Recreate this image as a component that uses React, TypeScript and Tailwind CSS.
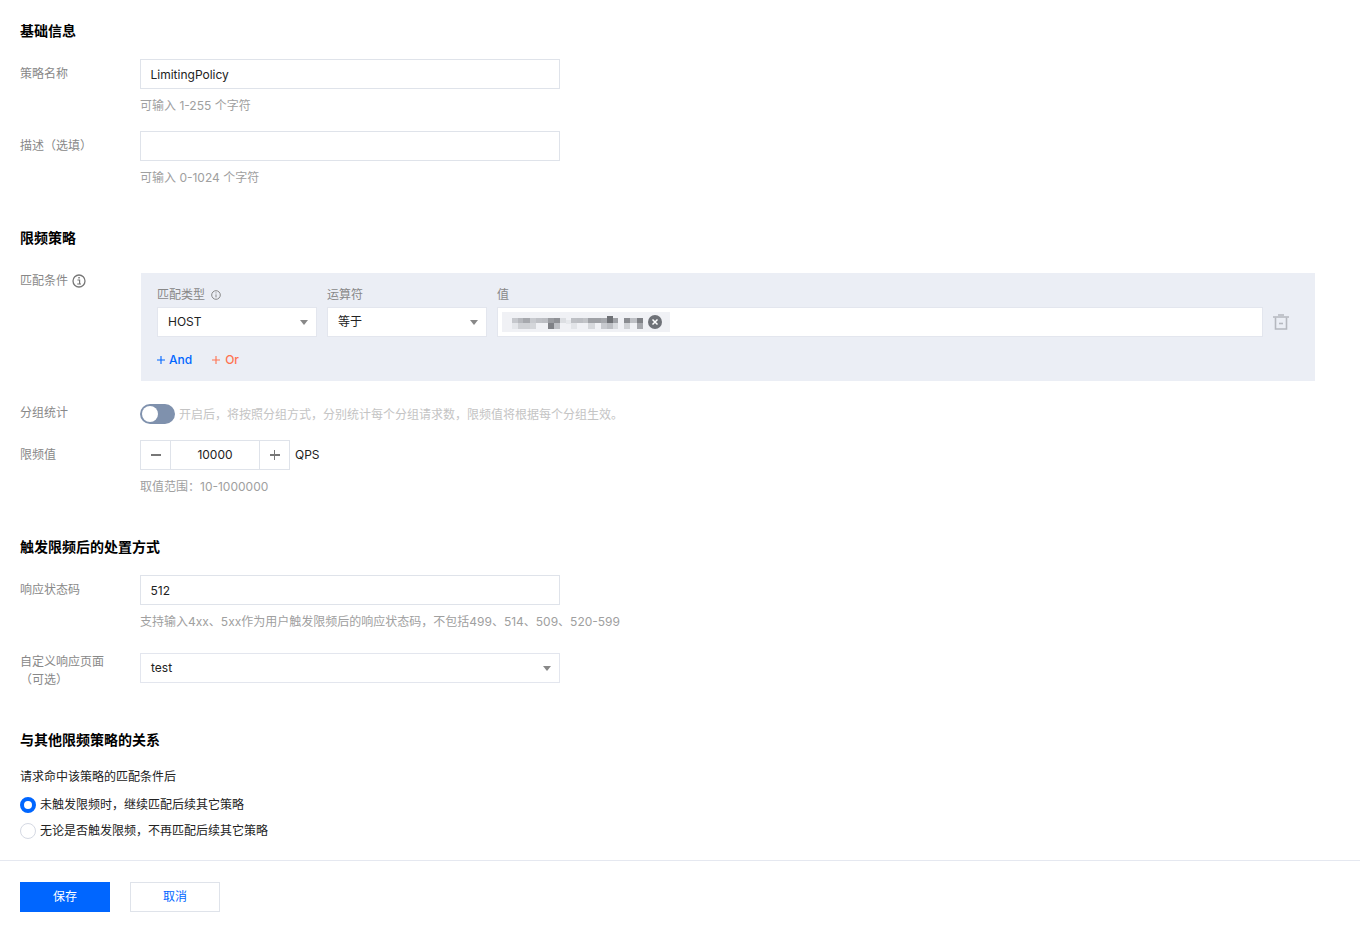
import type { ReactNode } from "react";

const font = { fontFamily: 'Inter, "Noto Sans CJK SC", sans-serif' };

// mosaic of the blurred value tag: [x, y, w, h, colour]
const mosaic: [number, number, number, number, string][] = [
  [10, 6, 6, 5, "#c6c8cd"], [16, 6, 5, 5, "#b6b8bd"], [21, 6, 7, 5, "#a6a8ad"], [28, 6, 6, 5, "#c8cacf"],
  [10, 11, 6, 6, "#e4e6ea"], [16, 11, 12, 6, "#cfd1d5"], [28, 11, 6, 6, "#d4d6da"],
  [34, 6, 6, 5, "#bfc1c6"], [40, 6, 6, 5, "#bcbec3"], [46, 6, 6, 5, "#9a9ca1"], [52, 6, 6, 5, "#8f9196"],
  [46, 11, 6, 6, "#7f8186"], [52, 11, 6, 6, "#bec0c5"], [58, 6, 6, 5, "#dcdee2"],
  [64, 8, 5, 4, "#e6e8ec"], [69, 6, 6, 5, "#bec0c5"], [75, 6, 6, 5, "#bcbec3"], [69, 11, 6, 6, "#e2e4e8"],
  [81, 6, 5, 5, "#c2c4c8"], [86, 6, 7, 5, "#9fa1a6"], [93, 6, 6, 5, "#9fa1a6"], [99, 6, 6, 5, "#a6a8ad"],
  [105, 4, 6, 7, "#6f7176"], [111, 6, 5, 5, "#9fa1a6"], [86, 11, 7, 6, "#d6d8dc"], [99, 11, 6, 6, "#c8cacf"],
  [105, 11, 6, 6, "#bcbec3"], [111, 11, 5, 6, "#d8dade"],
  [122, 6, 6, 5, "#8a8c91"], [128, 6, 7, 5, "#bec0c5"], [135, 6, 6, 5, "#7f8186"], [122, 11, 6, 6, "#cfd1d5"],
  [135, 11, 6, 6, "#a6a8ad"],
];

function Label({ children }: { children: ReactNode }) {
  return <div className="w-[120px] shrink-0 pt-[5px] text-xs leading-5 text-[#888888]">{children}</div>;
}

function Title({ children, className }: { children: ReactNode; className: string }) {
  return <h3 className={`h-5 text-sm leading-5 font-bold text-black ${className}`}>{children}</h3>;
}

function Hint({ children }: { children: ReactNode }) {
  return <p className="ml-[120px] mt-[7px] h-5 text-xs leading-5 text-[#a0a0a0]">{children}</p>;
}

function Input({ value }: { value?: string }) {
  return (
    <div className="flex h-[30px] w-[420px] items-center border border-[#dfe3ea] bg-white px-[9.5px] pt-px text-xs text-[#222222]">
      {value}
    </div>
  );
}

function Select({ value, className }: { value: string; className: string }) {
  return (
    <div className={`flex h-[30px] items-center justify-between border border-[#e3e6ee] bg-white pl-2.5 pr-[8px] text-xs text-[#222222] ${className}`}>
      <span>{value}</span>
      <span className="h-0 w-0 border-x-[4px] border-t-[5px] border-x-transparent border-t-[#888888]" />
    </div>
  );
}

function FieldHead({ children, className }: { children: ReactNode; className: string }) {
  return <div className={`flex h-5 items-center text-xs text-[#888888] ${className}`}>{children}</div>;
}

function Plus({ color }: { color: string }) {
  return (
    <svg width="8" height="8" viewBox="0 0 8 8" fill="none">
      <path d="M0 4h8M4 0v8" stroke={color} strokeWidth="1.1" />
    </svg>
  );
}

export default function App() {
  return (
    <div className="h-[932px] w-[1360px] overflow-hidden bg-white" style={font}>
      <div className="px-5 pt-[21px]">
        <Title className="">基础信息</Title>

        <div className="mt-[18px] flex">
          <Label>策略名称</Label>
          <Input value="LimitingPolicy" />
        </div>
        <Hint>可输入 1-255 个字符</Hint>

        <div className="mt-[15px] flex">
          <Label>描述（选填）</Label>
          <Input />
        </div>
        <Hint>可输入 0-1024 个字符</Hint>

        <Title className="mt-[40px]">限频策略</Title>

        <div className="mt-[25px] flex">
          <div className="flex h-5 w-[121px] shrink-0 items-start gap-1 text-xs leading-[16px] text-[#888888]">
            <span>匹配条件</span>
            <svg width="14" height="14" viewBox="0 0 14 14" fill="none" className="mt-px">
              <circle cx="7" cy="7" r="6" stroke="#777777" strokeWidth="1.3" />
              <rect x="6.3" y="3" width="1.5" height="1.5" fill="#777777" />
              <path d="M5.4 6h2.2v3.8M5.2 10h3.8" stroke="#777777" strokeWidth="1.2" />
            </svg>
          </div>
          <div className="h-[108px] w-[1174px] bg-[#ebeef5] pl-4 pt-3">
            <div className="flex gap-2.5">
              <div className="w-40">
                <FieldHead className="gap-[6px]">
                  <span>匹配类型</span>
                  <svg width="10" height="10" viewBox="0 0 10 10" fill="none">
                    <circle cx="5" cy="5" r="4.3" stroke="#888888" />
                    <path d="M5 4.4v3M5 2.4v1" stroke="#888888" />
                  </svg>
                </FieldHead>
                <Select value="HOST" className="mt-[2px] w-40" />
              </div>
              <div className="w-40">
                <FieldHead className="">运算符</FieldHead>
                <Select value="等于" className="mt-[2px] w-40" />
              </div>
              <div className="w-[766px]">
                <FieldHead className="">值</FieldHead>
                <div className="mt-[2px] flex h-[30px] items-center border border-[#e3e6ee] bg-white pl-[4px]">
                  <div className="relative h-5 w-[168px] bg-[#f0f1f5]">
                    <svg width="150" height="20" className="absolute left-0 top-0">
                      {mosaic.map(([x, y, w, h, c], i) => (
                        <rect key={i} x={x} y={y} width={w} height={h} fill={c} />
                      ))}
                    </svg>
                    <span className="absolute left-[146px] top-[3px] flex h-[14px] w-[14px] items-center justify-center rounded-full bg-[#6f7278]">
                      <svg width="8" height="8" viewBox="0 0 8 8">
                        <path d="M1.5 1.5l5 5M6.5 1.5l-5 5" stroke="#ffffff" strokeWidth="1.5" />
                      </svg>
                    </span>
                  </div>
                </div>
              </div>
              <div className="mt-[22px] flex h-[30px] w-[16px] items-center justify-center">
                <svg width="16" height="16" viewBox="0 0 16 16" fill="none">
                  <path d="M0 3h16M5 1h6" stroke="#b5b8bf" strokeWidth="1.4" />
                  <path d="M2.5 3.5V15h11V3.5" stroke="#b5b8bf" strokeWidth="1.6" />
                  <path d="M6 9.5h4" stroke="#b5b8bf" strokeWidth="1.6" />
                </svg>
              </div>
            </div>
            <div className="mt-[13px] flex h-5 items-center text-xs font-medium">
              <span className="flex items-center gap-1 text-[#0066ff]">
                <Plus color="#0066ff" />
                And
              </span>
              <span className="ml-5 flex items-center gap-[5px] text-[#ff7350]">
                <Plus color="#ff7350" />
                Or
              </span>
            </div>
          </div>
        </div>

        <div className="mt-[21px] flex">
          <div className="w-[120px] shrink-0 pt-px text-xs leading-5 text-[#888888]">分组统计</div>
          <div className="mt-[2px] flex h-5 items-center">
            <span className="flex h-5 w-[35px] items-center rounded-full bg-[#7f91ad] pl-[2px]">
              <span className="h-4 w-4 rounded-full bg-white" />
            </span>
            <span className="ml-[4px] pt-px text-xs text-[#c4c4c4]">
              开启后，将按照分组方式，分别统计每个分组请求数，限频值将根据每个分组生效。
            </span>
          </div>
        </div>

        <div className="mt-[16px] flex">
          <Label>限频值</Label>
          <div className="flex items-center">
            <div className="flex h-[30px] w-[150px] items-center border border-[#dfe3ea] text-xs text-[#222222]">
              <span className="flex h-full w-[30px] items-center justify-center border-r border-[#dfe3ea]">
                <span className="h-[1.5px] w-[10px] bg-[#777777]" />
              </span>
              <span className="flex-1 text-center">10000</span>
              <span className="relative flex h-full w-[30px] items-center justify-center border-l border-[#dfe3ea]">
                <span className="h-[1.5px] w-[10px] bg-[#777777]" />
                <span className="absolute h-[10px] w-[1.5px] bg-[#777777]" />
              </span>
            </div>
            <span className="ml-[5px] text-xs text-[#222222]">QPS</span>
          </div>
        </div>
        <Hint>取值范围：10-1000000</Hint>

        <Title className="mt-[40px]">触发限频后的处置方式</Title>

        <div className="mt-[18px] flex">
          <Label>响应状态码</Label>
          <Input value="512" />
        </div>
        <Hint>支持输入4xx、5xx作为用户触发限频后的响应状态码，不包括499、514、509、520-599</Hint>

        <div className="mt-[21px] flex">
          <div className="w-[120px] shrink-0 text-xs leading-[18px] text-[#888888]">
            自定义响应页面
            <br />
            （可选）
          </div>
          <Select value="test" className="w-[420px] border-[#dfe3ea]" />
        </div>

        <Title className="mt-[41px]">与其他限频策略的关系</Title>

        <p className="mt-[17px] h-5 text-xs leading-5 text-[#222222]">请求命中该策略的匹配条件后</p>
        <div className="mt-[10px] flex h-[16px] items-center gap-[4px] text-xs text-[#222222]">
          <span className="h-4 w-4 rounded-full border-[4px] border-[#0066ff] bg-white" />
          未触发限频时，继续匹配后续其它策略
        </div>
        <div className="mt-[10px] flex h-[16px] items-center gap-[4px] text-xs text-[#222222]">
          <span className="h-4 w-4 rounded-full border border-[#d5d9e3] bg-white" />
          无论是否触发限频，不再匹配后续其它策略
        </div>
      </div>

      <div className="mt-[21px] flex gap-5 border-t border-[#e5e8f0] px-5 pt-[21px]">
        <button className="h-[30px] w-[90px] bg-[#0066ff] text-xs text-white">保存</button>
        <button className="h-[30px] w-[90px] border border-[#dfe3ea] bg-white text-xs text-[#0066ff]">取消</button>
      </div>
    </div>
  );
}
